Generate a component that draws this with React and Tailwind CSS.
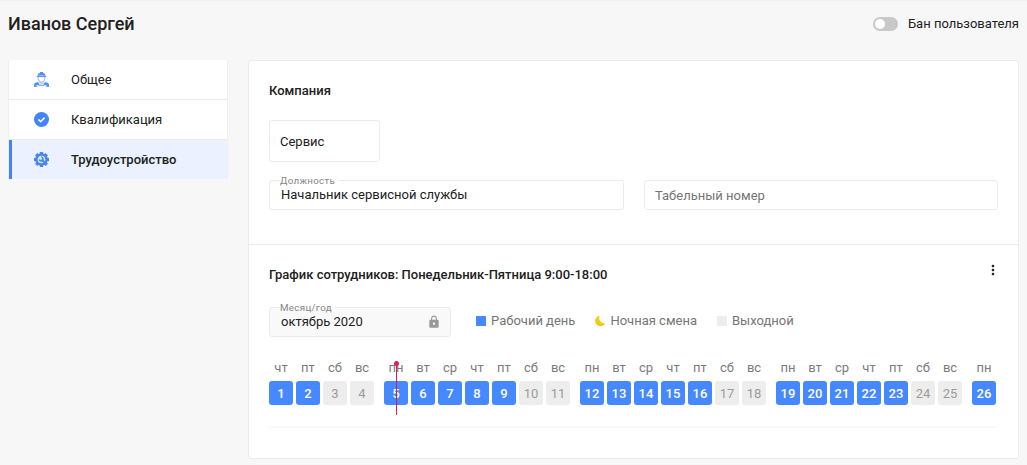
import React from "react";
import { MdLock, MdMoreVert } from "react-icons/md";

function WorkerIcon() {
  return (
    <svg viewBox="0 0 15 15" className="size-[15px]" fill="#5590f5">
      <path d="M3.500 4C3.500 2.300 4.600 1.200 6 .8V.1h3v.7c1.400.4 2.500 1.500 2.500 3.200h.7v1H2.800V4z" />
      <path d="M4.200 3.600h6.600" stroke="#c9dcfc" strokeWidth="0.600" />
      <path d="M4.200 5v1.700C4.200 8.600 5.600 10 7.500 10s3.300-1.400 3.300-3.300V5" fill="none" stroke="#7eaaf7" strokeWidth="0.900" />
      <path d="M5.400 9.900 7.500 12l2.100-2.100" fill="none" stroke="#7eaaf7" strokeWidth="0.800" />
      <path d="M0 15v-2.200c0-1.500 1.200-2.200 4-2.700l1.300 1.600V13H3.200v2H2.400v-1.800H1.900V15zM15 15v-2.200c0-1.500-1.200-2.200-4-2.700l-1.300 1.600V13h2.100v2h.8v-1.800h.5V15z" />
      <path d="M4.500 12.700h6v1h-6z" />
    </svg>
  );
}

function CheckIcon() {
  return (
    <svg viewBox="0 0 15 15" className="size-[15px]">
      <circle cx="7.500" cy="7.500" r="7.500" fill="#4285f7" />
      <path d="m4.500 7.500 2.200 2.100 3.900-3.900" fill="none" stroke="#fff" strokeWidth="1.700" />
    </svg>
  );
}

function GearIcon() {
  return (
    <svg viewBox="0 0 15 15" className="size-[15px]">
      <g fill="#4687f2">
        <circle cx="7.500" cy="7.500" r="6.200" />
        <rect x="5.800" y="0" width="3.400" height="15" rx="0.500" />
        <rect x="5.800" y="0" width="3.400" height="15" rx="0.500" transform="rotate(45 7.500 7.500)" />
        <rect x="5.800" y="0" width="3.400" height="15" rx="0.500" transform="rotate(90 7.500 7.500)" />
        <rect x="5.800" y="0" width="3.400" height="15" rx="0.500" transform="rotate(135 7.500 7.500)" />
      </g>
      <circle cx="7.500" cy="7.500" r="3.800" fill="#d8e5fd" />
      <path d="m7.500 7.500 3.500 3.500" stroke="#4687f2" strokeWidth="2.100" />
      <path d="M7.200 5.100A1.900 1.900 0 1 1 5.300 7.600" fill="none" stroke="#4687f2" strokeWidth="1.500" />
    </svg>
  );
}

const menu = [
  { label: "Общее", Icon: WorkerIcon },
  { label: "Квалификация", Icon: CheckIcon },
  { label: "Трудоустройство", Icon: GearIcon, active: true },
];

function Sidebar() {
  return (
    <nav className="h-[119px] w-[220px] border-x border-[#efefef] bg-white">
      {menu.map(({ label, Icon, active }) => (
        <a
          key={label}
          className={
            active
              ? "flex h-[39px] items-center border-l-[3px] border-[#4285f7] bg-[#ebf1fe] pl-[22px] font-medium"
              : "flex h-10 items-center border-b border-[#ebebeb] pl-[25px]"
          }
        >
          <Icon />
          <span className="pl-[22px]">{label}</span>
        </a>
      ))}
    </nav>
  );
}

function Field({ label, className, children }) {
  return (
    <div className={`relative flex h-[30px] items-center rounded-[3px] border border-[#ebebeb] px-[11px] ${className}`}>
      <span className="absolute -top-[7px] left-[10px] pr-[3px] text-[9.75px] leading-[14px] tracking-[0.32px] text-[#858585]">
        <span className="absolute top-[6px] left-0 h-px w-full bg-white" />
        <span className="relative">{label}</span>
      </span>
      {children}
    </div>
  );
}

const dayNames = ["пн", "вт", "ср", "чт", "пт", "сб", "вс"];
const weeks = [
  [1, 2, 3, 4],
  [5, 6, 7, 8, 9, 10, 11],
  [12, 13, 14, 15, 16, 17, 18],
  [19, 20, 21, 22, 23, 24, 25],
  [26],
];

function Day({ day }) {
  const weekday = (day + 2) % 7;
  return (
    <div className="relative w-6 text-center">
      <div className="h-[26px] pt-[4px] text-[13px] leading-[18px] text-[#7b7b7b]">{dayNames[weekday]}</div>
      <div
        className={
          weekday > 4
            ? "h-6 rounded-[3px] bg-[#ededed] text-[13px] leading-[25px] text-[#9b9b9b]"
            : "h-6 rounded-[3px] bg-[#4688ff] text-[13px] leading-[25px] font-medium text-white"
        }
      >
        {day}
      </div>
      {day === 5 && (
        <div className="absolute top-[8px] left-3 h-[52px] w-px bg-[#d3204c]">
          <div className="absolute -top-[2px] -left-[2px] size-[5px] rounded-full bg-[#e01e4c]" />
        </div>
      )}
    </div>
  );
}

export default function App() {
  return (
    <div className="h-[465px] w-[1027px] overflow-hidden border-t border-[#f1f1f1] bg-[#f7f7f7] font-['Roboto',sans-serif] text-[13px] text-[#212121]">
      <header className="flex h-[46px] items-center justify-between pr-2 pl-2">
        <h1 className="pb-[2px] text-[18px] font-medium">Иванов Сергей</h1>
        <label className="flex items-center gap-[10px]">
          <span className="flex h-[14px] w-[25px] items-center rounded-full bg-[#c8c8c8] pl-[2px]">
            <span className="size-[10px] rounded-full bg-white" />
          </span>
          Бан пользователя
        </label>
      </header>

      <div className="flex items-start gap-5 pt-[13px] pl-2">
        <Sidebar />
        <main className="h-[399px] w-[771px] rounded-[3px] border border-[#ebebeb] bg-white">
          <section className="h-[184px] border-b border-[#ebebeb] px-5 pt-5">
            <h2 className="text-[13px] leading-5 font-medium">Компания</h2>
            <div className="mt-[19px] flex h-[42px] w-[111px] items-center rounded-[3px] border border-[#ebebeb] pt-[2px] pl-[10px]">
              Сервис
            </div>
            <div className="mt-[18px] flex gap-5">
              <Field label="Должность" className="w-[355px]">
                Начальник сервисной службы
              </Field>
              <div className="flex h-[30px] w-[354px] items-center rounded-[3px] border border-[#ebebeb] pt-px pl-[10px] text-[#757575]">
                Табельный номер
              </div>
            </div>
          </section>

          <section className="px-5 pt-5">
            <div className="flex items-start justify-between">
              <h2 className="text-[13px] leading-5 font-medium">
                График сотрудников: Понедельник-Пятница 9:00-18:00
              </h2>
              <MdMoreVert className="-mt-[3px] -mr-[3px] size-4" />
            </div>
            <div className="mt-[22px] flex h-[30px] items-center">
              <Field label="Месяц/год" className="w-[182px] justify-between bg-[#f9f9f9]">
                октябрь 2020
                <MdLock className="-mr-[2px] size-[14px] text-[#999]" />
              </Field>
              <div className="ml-[25px] flex items-center pb-[2px] text-[#757575]">
                <span className="mr-[5px] size-[10px] bg-[#4688ff]" />
                Рабочий день
                <svg viewBox="0 0 10 10" className="mr-[5px] ml-5 size-[10px]" fill="#f4c813">
                  <path d="M4.300 0A5.300 5.300 0 0 0 9.900 7.400 5.100 5.100 0 1 1 4.300 0Z" stroke="#f4c813" strokeWidth="0.500" />
                </svg>
                Ночная смена
                <span className="mr-[5px] ml-5 size-[10px] bg-[#ededed]" />
                Выходной
              </div>
            </div>
            <div className="mt-[18px] flex h-[73px] gap-[10px] border-b-2 border-[#fafafa]">
              {weeks.map((week) => (
                <div key={week[0]} className="flex gap-[3px]">
                  {week.map((day) => (
                    <Day key={day} day={day} />
                  ))}
                </div>
              ))}
            </div>
          </section>
        </main>
      </div>
    </div>
  );
}
